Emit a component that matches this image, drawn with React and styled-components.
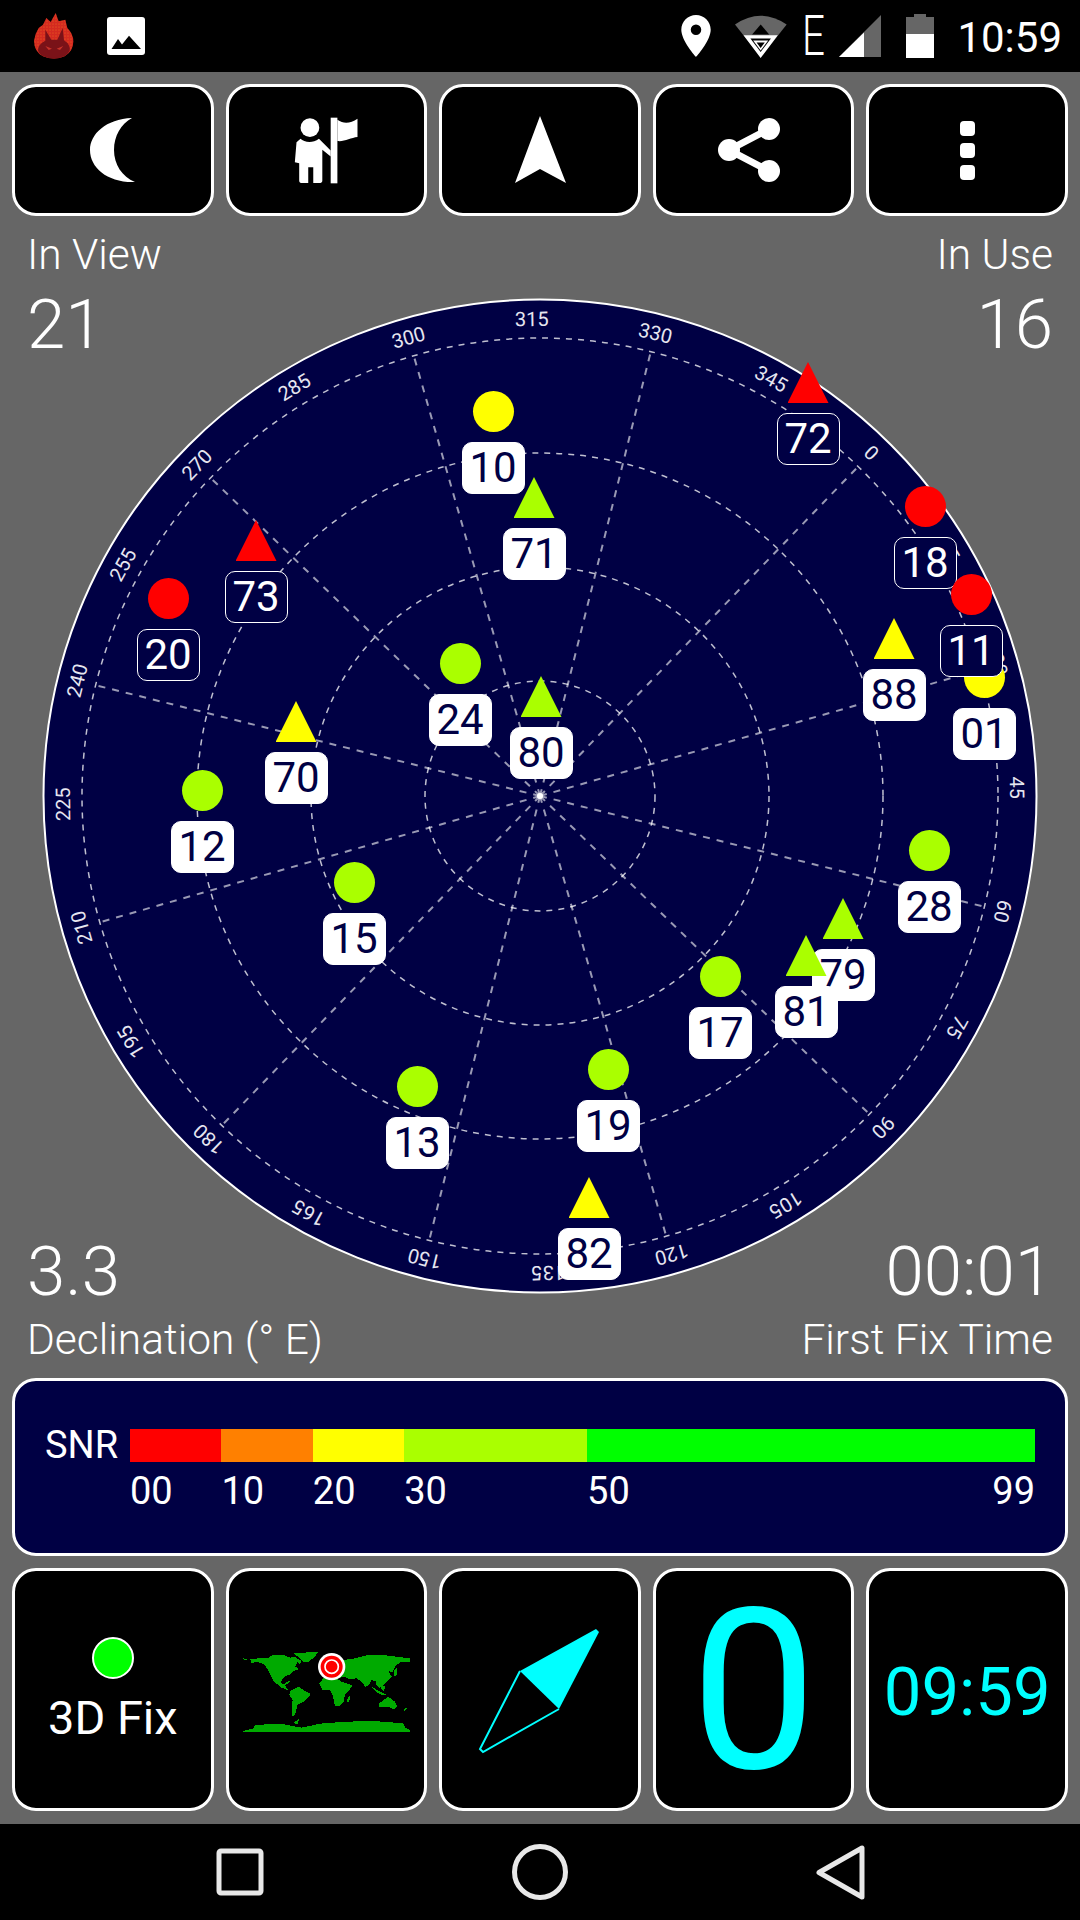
import React from 'react';
import styled, { createGlobalStyle } from 'styled-components';

const NAVY = '#000044';
const CYAN = '#00ffff';
const RED = '#ff0000';
const YELLOW = '#ffff00';
const LIME = '#aaff00';

const GlobalStyle = createGlobalStyle`
  html, body {
    margin: 0;
    padding: 0;
    background: #666666;
    font-family: Roboto, "Liberation Sans", sans-serif;
  }
`;

const Page = styled.div`
  width: 1080px;
  height: 1920px;
  display: flex;
  flex-direction: column;
  background: #666666;
  overflow: hidden;
`;

const StatusBar = styled.div`
  height: 72px;
  flex: none;
  background: #000000;
  display: flex;
  align-items: center;
  padding: 0 18px 0 28px;
  color: #ffffff;
`;

const StatusIcon = styled.svg`
  flex: none;
  display: block;
  margin-left: ${({ $gap }) => $gap || 0}px;
`;

const NetworkType = styled.span`
  width: 20px;
  margin-left: 15px;
  font-size: 56px;
  font-weight: 300;
  line-height: 72px;
  transform: scaleX(0.72);
  transform-origin: left center;
`;

const Clock = styled.span`
  margin-left: 23px;
  padding-top: 3px;
  font-size: 42px;
  line-height: 69px;
`;

const Spacer = styled.div`
  flex: 1;
`;

const Main = styled.div`
  flex: 1;
  display: flex;
  flex-direction: column;
  padding: 12px 12px 13px;
`;

const ButtonRow = styled.div`
  display: grid;
  grid-template-columns: repeat(5, 1fr);
  gap: 12px;
  height: ${({ $height }) => $height}px;
  flex: none;
`;

const Tile = styled.div`
  box-sizing: border-box;
  border: 3px solid #ffffff;
  border-radius: 24px;
  background: #000000;
  display: flex;
  flex-direction: column;
  align-items: center;
  justify-content: center;
  color: ${({ $color }) => $color || '#ffffff'};
`;

const ShareIcon = styled.svg`
  flex: none;
  margin-right: 10px;
`;

const DotMenu = styled.div`
  display: flex;
  flex-direction: column;
  gap: 7px;
`;

const MenuDot = styled.div`
  width: 15px;
  height: 15px;
  border-radius: 4px;
  background: #ffffff;
`;

const SkyArea = styled.div`
  flex: 1;
  display: grid;
  grid-template-columns: 1fr;
  grid-template-rows: 1fr;
`;

const StatRow = styled.div`
  grid-area: 1 / 1;
  align-self: ${({ $bottom }) => ($bottom ? 'end' : 'start')};
  display: flex;
  justify-content: space-between;
  padding: ${({ $bottom }) => ($bottom ? '0 15px 14px' : '15px 15px 0')};
  color: #ffffff;
  pointer-events: none;
`;

const Stat = styled.div`
  display: flex;
  flex-direction: column;
  align-items: ${({ $right }) => ($right ? 'flex-end' : 'flex-start')};
`;

const StatLabel = styled.div`
  font-size: 42.5px;
  line-height: 48px;
  font-weight: 300;
`;

const StatValue = styled.div`
  font-size: 69px;
  line-height: 72px;
  font-weight: 300;
  margin: ${({ $bottom }) => ($bottom ? '0 0 8px' : '10px 0 0')};
`;

const Plot = styled.div`
  grid-area: 1 / 1;
  justify-self: center;
  position: relative;
  width: 1000px;
  height: 1000px;
  margin-top: 80px;
`;

const PlotSvg = styled.svg`
  display: block;
`;

const AngleText = styled.text`
  fill: #e6e6f0;
  font-size: 20px;
  font-family: Roboto, sans-serif;
  text-anchor: middle;
  dominant-baseline: central;
`;

const Sat = styled.div`
  position: absolute;
  left: ${({ $x }) => $x}px;
  top: ${({ $y }) => $y}px;
  width: 63px;
  margin: -21px 0 0 -31.5px;
  display: flex;
  flex-direction: column;
  align-items: center;
  gap: 10px;
`;

const Circle = styled.div`
  width: 41px;
  height: 41px;
  border-radius: 50%;
  background: ${({ $color }) => $color};
`;

const Triangle = styled.div`
  width: 41px;
  height: 41px;
  background: ${({ $color }) => $color};
  clip-path: polygon(50% 0, 100% 100%, 0 100%);
`;

const SatLabel = styled.div`
  box-sizing: border-box;
  width: 63px;
  height: 52px;
  border-radius: 10px;
  border: 1.5px solid #ffffff;
  background: ${({ $used }) => ($used ? '#ffffff' : NAVY)};
  color: ${({ $used }) => ($used ? NAVY : '#ffffff')};
  font-size: 42px;
  line-height: 49px;
  text-align: center;
`;

const SnrPanel = styled.div`
  box-sizing: border-box;
  height: 178px;
  flex: none;
  border: 3px solid #ffffff;
  border-radius: 24px;
  background: ${NAVY};
  padding: 48px 30px 0;
  display: grid;
  grid-template-columns: 85px 1fr;
  grid-template-rows: 33px auto;
  row-gap: 8px;
  color: #ffffff;
`;

const SnrTitle = styled.div`
  font-size: 38px;
  line-height: 33px;
`;

const SnrBar = styled.div`
  display: flex;
`;

const SnrSegment = styled.div`
  flex: ${({ $span }) => $span} 0 0;
  background: ${({ $color }) => $color};
`;

const SnrTicks = styled.div`
  grid-column: 2;
  display: flex;
  font-size: 38px;
  line-height: 42px;
`;

const SnrTick = styled.div`
  flex: ${({ $span }) => $span} 0 0;
  display: flex;
  justify-content: space-between;
`;

const BottomRow = styled(ButtonRow)`
  margin-top: 12px;
`;

const FixDot = styled.div`
  box-sizing: border-box;
  width: 42px;
  height: 42px;
  border-radius: 50%;
  border: 2px solid #ffffff;
  background: #00ff00;
  margin-top: 3px;
`;

const FixText = styled.div`
  font-size: 47px;
  line-height: 56px;
  margin-top: 11px;
`;

const MapIcon = styled.svg`
  flex: none;
  margin: 6px 0 0 2px;
`;

const NeedleIcon = styled.svg`
  flex: none;
  margin-top: 2px;
`;

const BigZero = styled.div`
  font-size: 224px;
  line-height: 224px;
  margin-top: 4px;
`;

const GpsTime = styled.div`
  font-size: 67px;
  line-height: 76px;
  margin-top: 5px;
`;

const NavBar = styled.div`
  height: 96px;
  flex: none;
  background: #000000;
  display: flex;
  align-items: center;
  justify-content: center;
`;

const NavSlot = styled.div`
  width: 300px;
  display: flex;
  justify-content: center;
`;

const satellites = [
  { id: '20', x: 168, y: 599, shape: 'c', color: RED },
  { id: '73', x: 256, y: 541, shape: 't', color: RED },
  { id: '10', x: 493, y: 412, shape: 'c', color: YELLOW, used: true },
  { id: '71', x: 534, y: 498, shape: 't', color: LIME, used: true },
  { id: '72', x: 808, y: 383, shape: 't', color: RED },
  { id: '18', x: 925, y: 507, shape: 'c', color: RED },
  { id: '01', x: 984, y: 678, shape: 'c', color: YELLOW, used: true },
  { id: '11', x: 971, y: 595, shape: 'c', color: RED },
  { id: '88', x: 894, y: 639, shape: 't', color: YELLOW, used: true },
  { id: '24', x: 460, y: 664, shape: 'c', color: LIME, used: true },
  { id: '80', x: 541, y: 697, shape: 't', color: LIME, used: true },
  { id: '70', x: 296, y: 722, shape: 't', color: YELLOW, used: true },
  { id: '12', x: 202, y: 791, shape: 'c', color: LIME, used: true },
  { id: '15', x: 354, y: 883, shape: 'c', color: LIME, used: true },
  { id: '28', x: 929, y: 851, shape: 'c', color: LIME, used: true },
  { id: '79', x: 843, y: 919, shape: 't', color: LIME, used: true },
  { id: '81', x: 806, y: 956, shape: 't', color: LIME, used: true },
  { id: '17', x: 720, y: 977, shape: 'c', color: LIME, used: true },
  { id: '19', x: 608, y: 1070, shape: 'c', color: LIME, used: true },
  { id: '13', x: 417, y: 1087, shape: 'c', color: LIME, used: true },
  { id: '82', x: 589, y: 1198, shape: 't', color: YELLOW, used: true },
];

const BEARING = 44;
const spokes = Array.from({ length: 12 }, (_, i) => i * 30);
const ticks = Array.from({ length: 24 }, (_, i) => i * 15);

function SkyPlot() {
  return (
    <Plot>
      <PlotSvg width="1000" height="1000" viewBox="-500 -500 1000 1000">
        <circle r="496.5" fill={NAVY} stroke="#ffffff" strokeWidth="2" />
        {[115, 229, 343, 458].map((r) => (
          <circle key={r} r={r} fill="none" stroke="#ffffff" strokeOpacity="0.75" strokeWidth="1.5" strokeDasharray="6 6" />
        ))}
        {spokes.map((a) => (
          <line key={a} y1="0" y2="-458" transform={`rotate(${a + BEARING})`} stroke="#ffffff" strokeOpacity="0.6" strokeWidth="2" strokeDasharray="7 7" />
        ))}
        <circle r="3" fill="#ffffff" />
        {ticks.map((a) => (
          <AngleText key={a} transform={`rotate(${a + BEARING}) translate(0 -477)`}>{a}</AngleText>
        ))}
      </PlotSvg>
      {satellites.map((s) => (
        <Sat key={s.id} $x={s.x - 40} $y={s.y - 296}>
          {s.shape === 'c' ? <Circle $color={s.color} /> : <Triangle $color={s.color} />}
          <SatLabel $used={s.used}>{s.id}</SatLabel>
        </Sat>
      ))}
    </Plot>
  );
}

function WorldMap() {
  return (
    <MapIcon width="175" height="95" viewBox="0 0 525 285">
      <g fill="#00aa00" shapeRendering="crispEdges">
        <path d="M30 42L60 40 88 38 92 32 115 30 130 30 150 38 165 36 185 48 180 58 172 52 165 65 178 72 160 78 152 88 140 92 128 100 122 112 130 118 145 108 150 110 135 122 142 132 150 138 144 136 125 128 112 118 100 108 92 90 82 72 72 58 50 50 35 55z" />
        <path d="M160 25L235 20 225 35 205 50 190 52 180 40 170 32z" />
        <path d="M150 138L175 125 195 138 212 146 205 158 190 170 172 180 165 210 157 213 155 190 158 165 148 150z" />
        <path d="M238 115L250 100 290 100 305 110 320 115 338 122 325 138 315 150 310 172 298 183 285 183 278 150 270 135 248 135z" />
        <path d="M325 155L330 153 328 170 320 172z" />
        <path d="M310 45L345 40 385 30 430 30 470 35 510 40 510 52 480 52 465 65 458 82 445 78 455 95 440 112 425 125 418 128 410 122 408 110 395 105 385 122 375 125 365 110 350 100 325 102 315 95 290 100 265 98 300 85z" />
        <path d="M462 78L470 70 472 88 462 95z" />
        <path d="M395 125L420 140 440 150 425 150 405 138z" />
        <path d="M425 118L435 125 432 140 423 130z" />
        <path d="M418 175L430 165 445 155 465 170 472 185 462 193 445 185 418 185z" />
        <path d="M490 195L503 185 495 198z" />
        <path d="M10 258L40 250 45 240 120 236 185 248 240 236 320 230 400 228 490 235 495 248 510 255 510 260 10 260z" />
        <path d="M160 232L178 222 172 240z" />
        <path d="M10 40L22 42 22 46 12 44z" />
      </g>
      <circle cx="275" cy="65" r="41" fill="#ffffff" />
      <circle cx="275" cy="65" r="33" fill={RED} />
      <circle cx="275" cy="65" r="20" fill="none" stroke="#ffffff" strokeWidth="5" />
    </MapIcon>
  );
}

export default function App() {
  return (
    <Page>
      <GlobalStyle />
      <StatusBar>
        <StatusIcon width="52" height="56" viewBox="0 0 156 168">
          <defs>
            <pattern id="sparks" width="9" height="9" patternUnits="userSpaceOnUse">
              <circle cx="3" cy="3" r="1.400" fill="#ff9a20" />
            </pattern>
          </defs>
          <path d="M83 15L92 40 112 35 118 60Q136 78 136 100 136 130 110 145 78 158 45 145 18 130 18 98 22 75 32 60L45 50 55 30 68 42z" fill="#d42a20" />
          <path d="M83 15L92 40 112 35 118 60Q136 78 136 100 136 130 110 145 78 158 45 145 18 130 18 98 22 75 32 60L45 50 55 30 68 42z" fill="url(#sparks)" />
          <path d="M52 65L70 95H88L104 60 108 97Q128 110 125 128 115 150 78 152 38 150 30 128 30 108 52 98z" fill="#7a1218" />
          <path d="M52 114L72 122 62 126zM106 114L86 122 96 126z" fill="#c8322a" />
        </StatusIcon>
        <StatusIcon $gap={27} width="38" height="38" viewBox="0 0 38 38">
          <rect width="38" height="38" rx="3" fill="#ffffff" />
          <path d="M4.500 32L11 22l4 5.500 7-8.800L34 32z" fill="#000000" />
        </StatusIcon>
        <Spacer />
        <StatusIcon width="30" height="42" viewBox="5 2 14 20">
          <path d="M12 2C8.130 2 5 5.130 5 9c0 5.250 7 13 7 13s7-7.750 7-13c0-3.870-3.130-7-7-7zm0 9.500a2.500 2.500 0 0 1 0-5 2.500 2.500 0 0 1 0 5z" fill="#ffffff" />
        </StatusIcon>
        <StatusIcon $gap={24} width="52" height="43" viewBox="565 42 152 128" preserveAspectRatio="none">
          <path d="M565 70Q640 18 716 70L640 168z" fill="#666666" />
          <path d="M640 70L665 100H615z" fill="#000000" />
          <path d="M590 102H690L640 170z" fill="#ffffff" />
          <path d="M610 112H670L640 152z" fill="#000000" />
          <path d="M618 118H662L640 148z" fill="#ffffff" />
          <path d="M628 124H652L640 140z" fill="#000000" />
        </StatusIcon>
        <NetworkType>E</NetworkType>
        <StatusIcon $gap={17} width="42" height="42" viewBox="0 0 42 42">
          <path d="M42 0V42H0z" fill="#666666" />
          <path d="M25 17.500V42H0z" fill="#ffffff" />
        </StatusIcon>
        <StatusIcon $gap={25} width="28" height="44" viewBox="0 0 28 44">
          <path d="M8 0h12v3h8v17H0V3h8z" fill="#666666" />
          <path d="M0 20h28v24H0z" fill="#ffffff" />
        </StatusIcon>
        <Clock>10:59</Clock>
      </StatusBar>

      <Main>
        <ButtonRow $height={132}>
          <Tile>
            <svg width="47" height="66" viewBox="-2 0 47 66">
              <path d="M41 1C15 2-1 17-1 33c0 18 18 33 45 32C31 60 23 47 23 33 23 19 30 7 41 1z" fill="#ffffff" />
            </svg>
          </Tile>
          <Tile>
            <svg width="67" height="67" viewBox="850 350 195 200">
              <g fill="#ffffff">
                <circle cx="898" cy="382" r="28" />
                <path d="M870 415c10 10 35 15 55 0l35 35v18l-25-20v92q0 7-10 7h-17v-47h-15v47h-18q-9 0-9-7v-52l-13-3 5-60z" />
                <path d="M960 352h20v196h-20z" />
                <path d="M980 358c20 14 40 10 60-3v55c-20 2-40 15-60 12z" />
              </g>
            </svg>
          </Tile>
          <Tile>
            <svg width="52" height="68" viewBox="0 0 52 68">
              <path d="M26 0L52 67 26 53 1 67z" fill="#ffffff" />
            </svg>
          </Tile>
          <Tile>
            <ShareIcon width="64" height="66" viewBox="0 0 64 66">
              <g fill="#ffffff" stroke="#ffffff">
                <circle cx="52" cy="12" r="11" strokeWidth="0" />
                <circle cx="12" cy="33" r="11" strokeWidth="0" />
                <circle cx="52" cy="54" r="11" strokeWidth="0" />
                <path d="M52 12L12 33 52 54" fill="none" strokeWidth="7" />
              </g>
            </ShareIcon>
          </Tile>
          <Tile>
            <DotMenu>
              <MenuDot />
              <MenuDot />
              <MenuDot />
            </DotMenu>
          </Tile>
        </ButtonRow>

        <SkyArea>
          <SkyPlot />
          <StatRow>
            <Stat>
              <StatLabel>In View</StatLabel>
              <StatValue>21</StatValue>
            </Stat>
            <Stat $right>
              <StatLabel>In Use</StatLabel>
              <StatValue>16</StatValue>
            </Stat>
          </StatRow>
          <StatRow $bottom>
            <Stat>
              <StatValue $bottom>3.3</StatValue>
              <StatLabel>Declination (° E)</StatLabel>
            </Stat>
            <Stat $right>
              <StatValue $bottom>00:01</StatValue>
              <StatLabel>First Fix Time</StatLabel>
            </Stat>
          </StatRow>
        </SkyArea>

        <SnrPanel>
          <SnrTitle>SNR</SnrTitle>
          <SnrBar>
            <SnrSegment $span={10} $color={RED} />
            <SnrSegment $span={10} $color="#ff8000" />
            <SnrSegment $span={10} $color={YELLOW} />
            <SnrSegment $span={20} $color={LIME} />
            <SnrSegment $span={49} $color="#00ff00" />
          </SnrBar>
          <SnrTicks>
            <SnrTick $span={10}>00</SnrTick>
            <SnrTick $span={10}>10</SnrTick>
            <SnrTick $span={10}>20</SnrTick>
            <SnrTick $span={20}>30</SnrTick>
            <SnrTick $span={49}>
              <span>50</span>
              <span>99</span>
            </SnrTick>
          </SnrTicks>
        </SnrPanel>

        <BottomRow $height={243}>
          <Tile>
            <FixDot />
            <FixText>3D Fix</FixText>
          </Tile>
          <Tile>
            <WorldMap />
          </Tile>
          <Tile>
            <NeedleIcon width="123" height="127" viewBox="479 1627 123 127">
              <path d="M597 1629L600 1632 560 1709 521 1671z" fill={CYAN} />
              <path d="M521 1671L481 1749 484 1752 560 1709" fill="none" stroke={CYAN} strokeWidth="2" />
            </NeedleIcon>
          </Tile>
          <Tile $color={CYAN}>
            <BigZero>0</BigZero>
          </Tile>
          <Tile $color={CYAN}>
            <GpsTime>09:59</GpsTime>
          </Tile>
        </BottomRow>
      </Main>

      <NavBar>
        <NavSlot>
          <svg width="48" height="48" viewBox="0 0 48 48">
            <rect x="3" y="3" width="42" height="42" rx="2" fill="none" stroke="#e8e8e8" strokeWidth="5" />
          </svg>
        </NavSlot>
        <NavSlot>
          <svg width="58" height="58" viewBox="0 0 58 58">
            <circle cx="29" cy="29" r="25.500" fill="none" stroke="#e8e8e8" strokeWidth="5" />
          </svg>
        </NavSlot>
        <NavSlot>
          <svg width="50" height="57" viewBox="0 0 50 57">
            <path d="M4 28.500L47 4V53z" fill="none" stroke="#e8e8e8" strokeWidth="5" strokeLinejoin="round" />
          </svg>
        </NavSlot>
      </NavBar>
    </Page>
  );
}
